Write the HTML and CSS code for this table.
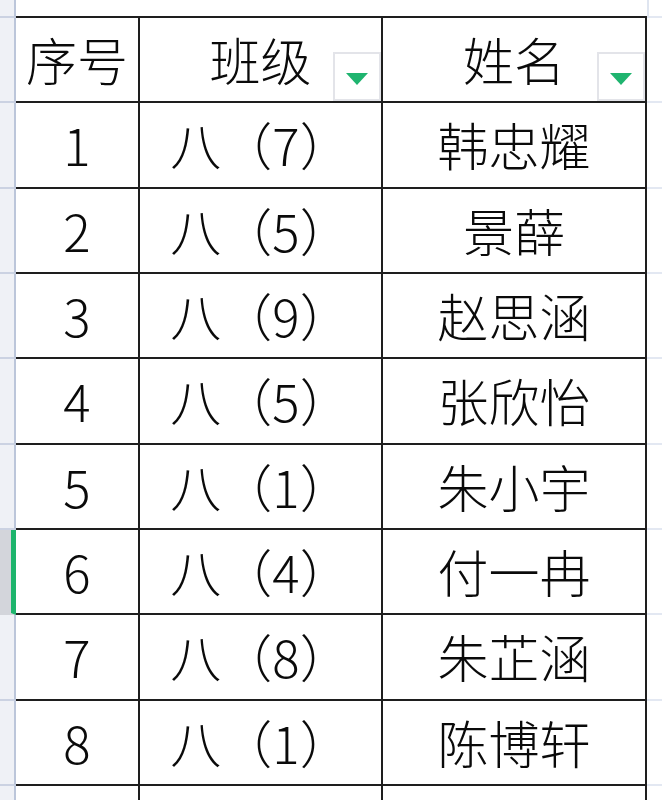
FILE: index.html
```html
<!DOCTYPE html>
<html lang="zh-CN">
<head>
<meta charset="utf-8">
<title>名单</title>
<link rel="stylesheet" href="styles.css">
</head>
<body>
<div class="sheet">
  <div class="rh top"></div>
  <div class="gap top-cell"></div>
  <div class="gap top-cell"></div>
  <div class="gap top-cell"></div>
  <div class="pad top-pad"></div>

  <div class="rh"></div>
  <div class="c">序号</div>
  <div class="c hd">班级<span class="filter"><i class="tri"></i></span></div>
  <div class="c hd">姓名<span class="filter"><i class="tri"></i></span></div>
  <div class="pad"></div>

  <div class="rh"></div><div class="c">1</div><div class="c">八（7）</div><div class="c">韩忠耀</div><div class="pad"></div>
  <div class="rh"></div><div class="c">2</div><div class="c">八（5）</div><div class="c">景薛</div><div class="pad"></div>
  <div class="rh"></div><div class="c">3</div><div class="c">八（9）</div><div class="c">赵思涵</div><div class="pad"></div>
  <div class="rh"></div><div class="c">4</div><div class="c">八（5）</div><div class="c">张欣怡</div><div class="pad"></div>
  <div class="rh"></div><div class="c">5</div><div class="c">八（1）</div><div class="c">朱小宇</div><div class="pad"></div>
  <div class="rh sel"></div><div class="c">6</div><div class="c">八（4）</div><div class="c">付一冉</div><div class="pad"></div>
  <div class="rh"></div><div class="c">7</div><div class="c">八（8）</div><div class="c">朱芷涵</div><div class="pad"></div>
  <div class="rh"></div><div class="c">8</div><div class="c">八（1）</div><div class="c">陈博轩</div><div class="pad"></div>
  <div class="rh"></div><div class="c"></div><div class="c"></div><div class="c"></div><div class="pad"></div>
</div>
</body>
</html>
```

FILE: styles.css
```css
* { box-sizing: border-box; }

html, body {
  margin: 0;
  padding: 0;
  background: #ffffff;
  overflow: hidden;
}

.sheet {
  display: grid;
  grid-template-columns: 16px 124px 243px 264px 15px;
  grid-template-rows: 18px repeat(10, 85.33px);
  width: 662px;
  height: 800px;
  overflow: hidden;
  font-family: "Noto Sans CJK SC", "Noto Sans", sans-serif;
  font-weight: 300;
  font-size: 51px;
  color: #0a0a0a;
}

.rh {
  background: #eff1f6;
  border-right: 2px solid #bcc6da;
  border-bottom: 2px solid #cbd2e2;
}

.rh.sel {
  background: #d3d5db;
  border-right: 5px solid #1db46c;
  border-bottom-color: #d3d5db;
}

.top-cell {
  border-bottom: 2px solid #1e1e1e;
}

.top-pad {
  border-left: 2px solid #dfe5f0;
  border-bottom: 2px solid #dfe5f0;
}

.pad {
  border-bottom: 2px solid #e3e8f2;
}

.c {
  position: relative;
  display: flex;
  align-items: center;
  justify-content: center;
  line-height: 1;
  border-right: 2px solid #1e1e1e;
  border-bottom: 2px solid #1e1e1e;
  white-space: nowrap;
}

.filter {
  position: absolute;
  right: 0;
  bottom: 0;
  width: 48px;
  height: 49px;
  border: 2px solid #e3e4e9;
  background: #ffffff;
  display: flex;
  align-items: center;
  justify-content: center;
}

.tri {
  display: block;
  width: 0;
  height: 0;
  margin-top: 4px;
  border-left: 11px solid transparent;
  border-right: 11px solid transparent;
  border-top: 12px solid #1fb46f;
}
```
